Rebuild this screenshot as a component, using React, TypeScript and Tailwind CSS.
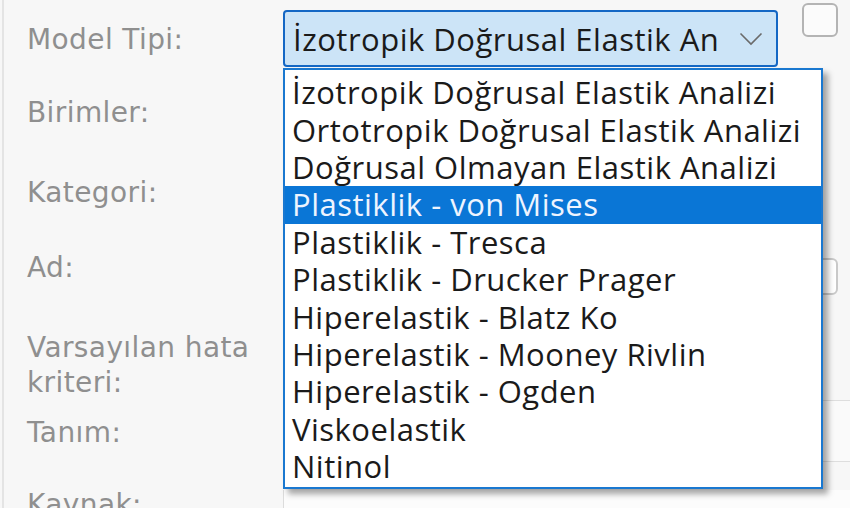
import React from "react";

const items = [
  "İzotropik Doğrusal Elastik Analizi",
  "Ortotropik Doğrusal Elastik Analizi",
  "Doğrusal Olmayan Elastik Analizi",
  "Plastiklik - von Mises",
  "Plastiklik - Tresca",
  "Plastiklik - Drucker Prager",
  "Hiperelastik - Blatz Ko",
  "Hiperelastik - Mooney Rivlin",
  "Hiperelastik - Ogden",
  "Viskoelastik",
  "Nitinol",
];

const labelFont = { fontFamily: '"DejaVu Sans", Verdana, sans-serif' };
const uiFont = { fontFamily: '"Open Sans", "Noto Sans", sans-serif' };

export default function App() {
  return (
    <div className="relative flex h-[508px] w-[850px] overflow-hidden bg-[#f7f7f7]">
      {/* label column */}
      <div
        className="ml-[2px] flex w-[281px] shrink-0 flex-col border-l-2 border-[#e4e4e4] pl-[23px] pt-[22px] text-[28px] leading-[35px] tracking-[0.4px] text-[#8f8f8f]"
        style={labelFont}
      >
        <div>Model Tipi:</div>
        <div className="mt-[38px]">Birimler:</div>
        <div className="mt-[45px]">Kategori:</div>
        <div className="mt-[40px]">Ad:</div>
        <div className="mt-[45px]">
          Varsayılan hata
          <br />
          kriteri:
        </div>
        <div className="mt-[15px]">Tanım:</div>
        <div className="mt-[37px]">Kaynak:</div>
      </div>

      {/* field column */}
      <div className="relative flex flex-1 flex-col">
        <div className="flex items-start">
          <div
            className="mt-[10px] flex h-[57px] w-[495px] items-center rounded-[4px] border-2 border-[#1467c4] bg-[#cce4f7] pl-[8px] pr-[12px] text-[31px] leading-[40px] tracking-[0.5px] text-[#1a1a1a]"
            style={uiFont}
          >
            <span className="flex-1 overflow-hidden whitespace-nowrap">İzotropik Doğrusal Elastik An</span>
            <svg width="24" height="14" viewBox="0 0 24 14" className="mr-[1px] shrink-0">
              <polyline points="1.5,1.5 12,12 22.5,1.5" fill="none" stroke="#6a6a6a" strokeWidth="1.6" />
            </svg>
          </div>
          <div className="ml-[24px] mt-[3px] h-[34px] w-[36px] rounded-[6px] border-2 border-[#b4b4b4] bg-[#fbfbfb]" />
        </div>

        {/* Ad field */}
        <div className="mt-[191px] h-[37px] w-[555px] rounded-[6px] border-2 border-[#c9c9c9] bg-white" />

        {/* Tanım field */}
        <div className="mt-[105px] h-[62px] w-[600px] border-y border-[#dedede] bg-[#fafafa]" />

        {/* Kaynak field */}
        <div className="mt-[28px] flex-1 border-l border-[#dcdcdc] bg-[#fcfcfc]" />

        {/* dropdown list */}
        <div
          className="absolute left-0 top-[68px] h-[421px] w-[540px] border-2 border-[#1a78d0] bg-white pt-[4px] shadow-[5px_5px_6px_rgba(0,0,0,0.35)]"
          style={uiFont}
        >
          {items.map((t, i) => (
            <div
              key={t}
              className={
                i === 3
                  ? "flex h-[37.4px] items-center whitespace-nowrap bg-[#0a76d6] pl-[7px] text-[31px] leading-[37px] tracking-[0.5px] text-[#eef4ff]"
                  : "flex h-[37.4px] items-center whitespace-nowrap pl-[7px] text-[31px] leading-[37px] tracking-[0.5px] text-[#1a1a1a]"
              }
            >
              {t}
            </div>
          ))}
        </div>
      </div>
    </div>
  );
}
